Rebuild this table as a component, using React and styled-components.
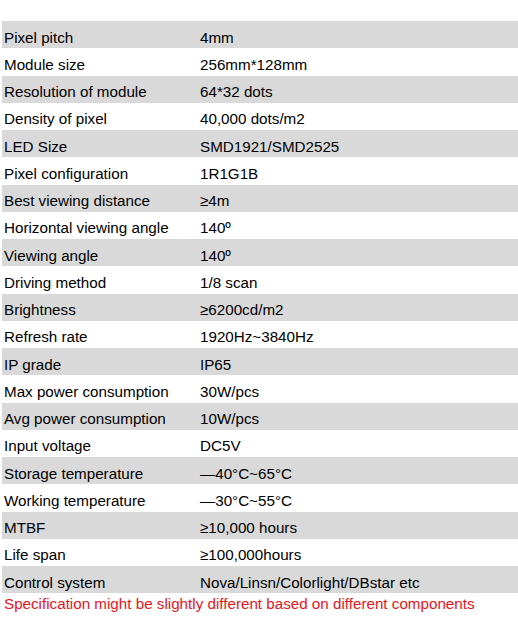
import React from 'react';
import styled, { createGlobalStyle } from 'styled-components';

const GlobalStyle = createGlobalStyle`
  body {
    margin: 0;
    background: #ffffff;
    font-family: "Liberation Sans", Arial, sans-serif;
  }
`;

const Page = styled.div`
  padding-top: 21px;
  width: 518px;
`;

const Table = styled.div`
  display: flex;
  flex-direction: column;
  margin-left: 2px;
`;

const Row = styled.div`
  display: grid;
  grid-template-columns: 196px 1fr;
  height: 27.25px;
  align-items: center;
  padding-top: 5px;
  box-sizing: border-box;
  background: ${props => (props.$shaded ? '#d9d9d9' : '#ffffff')};
  font-size: 15.2px;
  color: #000000;
`;

const Cell = styled.div`
  padding-left: 2px;
  white-space: nowrap;
`;

const Note = styled.div`
  padding: 2px 0 0 4px;
  font-size: 15.2px;
  color: #e8141c;
`;

const specs = [
  ['Pixel pitch', '4mm'],
  ['Module size', '256mm*128mm'],
  ['Resolution of module', '64*32 dots'],
  ['Density of pixel', '40,000 dots/m2'],
  ['LED Size', 'SMD1921/SMD2525'],
  ['Pixel configuration', '1R1G1B'],
  ['Best viewing distance', '≥4m'],
  ['Horizontal viewing angle', '140º'],
  ['Viewing angle', '140º'],
  ['Driving method', '1/8 scan'],
  ['Brightness', '≥6200cd/m2'],
  ['Refresh rate', '1920Hz~3840Hz'],
  ['IP grade', 'IP65'],
  ['Max power consumption', '30W/pcs'],
  ['Avg power consumption', '10W/pcs'],
  ['Input voltage', 'DC5V'],
  ['Storage temperature', '—40°C~65°C'],
  ['Working temperature', '—30°C~55°C'],
  ['MTBF', '≥10,000 hours'],
  ['Life span', '≥100,000hours'],
  ['Control system', 'Nova/Linsn/Colorlight/DBstar etc'],
];

export default function App() {
  return (
    <>
      <GlobalStyle />
      <Page>
        <Table>
          {specs.map(([name, value], i) => (
            <Row key={name} $shaded={i % 2 === 0}>
              <Cell>{name}</Cell>
              <Cell>{value}</Cell>
            </Row>
          ))}
        </Table>
        <Note>Specification might be slightly different based on different components</Note>
      </Page>
    </>
  );
}
